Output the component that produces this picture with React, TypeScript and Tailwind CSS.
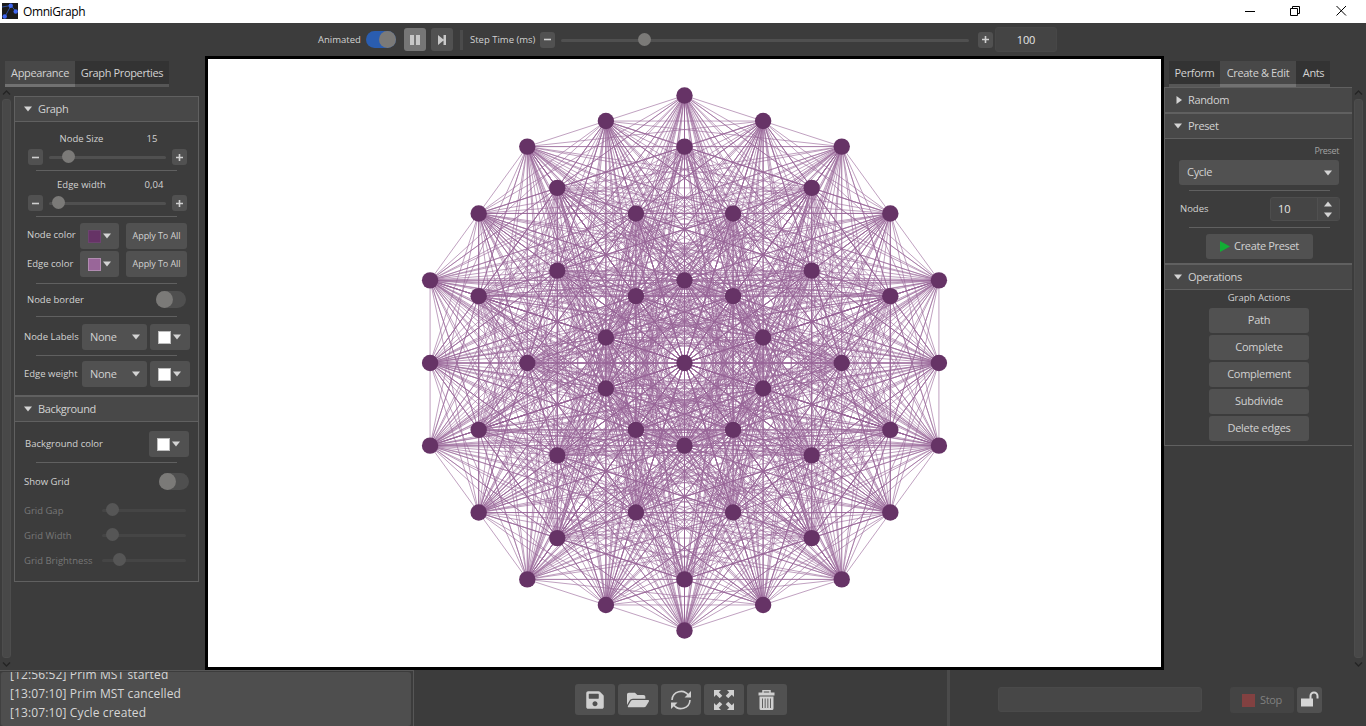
import React from "react";
import { FaSave, FaFolderOpen } from "react-icons/fa";

type P = { children?: React.ReactNode; className?: string };

const CX = 476.5;
const CY = 304;
const R = 133.75;

const unit = Array.from({ length: 10 }, (_, k) => ({
  x: R * Math.sin((k * Math.PI) / 5),
  y: -R * Math.cos((k * Math.PI) / 5),
}));

const nodes: { x: number; y: number; corner: number }[] = [];
for (let i = 0; i < 10; i++) {
  for (let j = i; j < 10; j++) {
    const n = { x: CX + unit[i].x + unit[j].x, y: CY + unit[i].y + unit[j].y, corner: i === j ? i : -1 };
    if (!nodes.some((m) => Math.hypot(m.x - n.x, m.y - n.y) < 1)) nodes.push(n);
  }
}

// Neighbouring corners are joined through the node between them, not directly.
const neighbours = (a: number, b: number) => a >= 0 && b >= 0 && [1, 9].includes(Math.abs(a - b));

const edges: string[] = [];
for (let i = 0; i < nodes.length; i++) {
  for (let j = i + 1; j < nodes.length; j++) {
    const a = nodes[i];
    const b = nodes[j];
    if (!neighbours(a.corner, b.corner)) {
      edges.push(`M${a.x.toFixed(2)} ${a.y.toFixed(2)}L${b.x.toFixed(2)} ${b.y.toFixed(2)}`);
    }
  }
}

function GraphCanvas() {
  return (
    <svg width="953" height="608" viewBox="0 0 953 608" className="block">
      <g stroke="#996699" strokeWidth="0.62" fill="none">
        {edges.map((d, i) => (
          <path key={i} d={d} />
        ))}
      </g>
      <g fill="#663366">
        {nodes.map((n, i) => (
          <circle key={i} cx={n.x} cy={n.y} r="8.2" />
        ))}
      </g>
    </svg>
  );
}

function Down({ className = "" }: P) {
  return (
    <svg width="8" height="6" viewBox="0 0 8 6" className={`shrink-0 ${className}`}>
      <path d="M0 .5h8L4 5.5z" fill="#d4d4d4" />
    </svg>
  );
}

function Small({ children, className = "" }: P) {
  return (
    <span className={`whitespace-nowrap text-[9.5px] leading-4 text-[#d2d2d2] ${className}`}>
      {children}
    </span>
  );
}

function Step({ plus = false }: { plus?: boolean }) {
  return (
    <span className="flex h-4 w-[15px] shrink-0 items-center justify-center rounded-[3px] bg-[#515151]">
      <svg width="9" height="9" viewBox="0 0 9 9" stroke="#d0d0d0" strokeWidth="1.6">
        <path d={plus ? "M1 4.5h7M4.5 1v7" : "M1 4.5h7"} />
      </svg>
    </span>
  );
}

function Slider({ className = "", knob, dim = false }: { className?: string; knob: string; dim?: boolean }) {
  return (
    <span className={`flex h-[13px] shrink-0 items-center ${className}`}>
      <span className={`h-[3px] w-full rounded-full ${dim ? "bg-[#454545]" : "bg-[#505050]"}`}>
        <span className={`-mt-[6px] block size-[13px] rounded-full ${dim ? "bg-[#565656]" : "bg-[#7b7a78]"} ${knob}`} />
      </span>
    </span>
  );
}

function Toggle({ on = false }: { on?: boolean }) {
  return (
    <span className={`flex h-[17px] w-[30px] shrink-0 rounded-full ${on ? "justify-end bg-[#2a5db0]" : "bg-[#4f4f4f]"}`}>
      <span className="size-[17px] rounded-full bg-[#7b7a78]" />
    </span>
  );
}

function Rule({ className = "" }: P) {
  return <div className={`ml-[21px] h-px w-[141px] shrink-0 bg-[#606060] ${className}`} />;
}

function Swatch({ color, className = "" }: { color: string; className?: string }) {
  return (
    <span className={`flex h-[26px] shrink-0 items-center gap-[2px] rounded-[3px] bg-[#515151] pl-2 ${className}`}>
      <span className={`size-[13px] border ${color}`} />
      <Down />
    </span>
  );
}

function Header({ children, className = "", closed = false }: P & { closed?: boolean }) {
  return (
    <div className={`flex shrink-0 items-center gap-[6px] bg-[#484848] text-[11px] tracking-[-0.36px] text-[#d2d2d2] ${className}`}>
      {closed ? (
        <svg width="8" height="8" viewBox="0 0 8 8">
          <path d="M1.5 0v8L7 4z" fill="#d4d4d4" />
        </svg>
      ) : (
        <Down />
      )}
      <span>{children}</span>
    </div>
  );
}

function Tab({ children, className = "", active = false }: P & { active?: boolean }) {
  return (
    <div
      className={`flex h-[26px] items-center justify-center whitespace-nowrap border-b-[3px] pt-[2px] text-[11px] tracking-[-0.36px] text-[#d2d2d2] ${
        active ? "border-[#717171] bg-[#484848]" : "border-[#565656] bg-[#333333]"
      } ${className}`}
    >
      {children}
    </div>
  );
}

function Scrollbar({ className = "" }: P) {
  return (
    <div className={`flex w-[9px] shrink-0 flex-col items-center ${className}`}>
      <svg width="9" height="5" viewBox="0 0 9 5" fill="none" stroke="#242424" strokeWidth="1.3" className="mt-[3px] shrink-0">
        <path d="M1 4.5l3.5-3.5L8 4.5" />
      </svg>
      <div className="mt-[4px] h-[559px] w-[9px] shrink-0 rounded-[3px] border border-[#4d4d4d] bg-[#484848]" />
      <svg width="9" height="5" viewBox="0 0 9 5" fill="none" stroke="#242424" strokeWidth="1.3" className="mt-[4px] shrink-0">
        <path d="M1 .5L4.5 4 8 .5" />
      </svg>
    </div>
  );
}

function Select({ children, className = "" }: P) {
  return (
    <span className={`flex shrink-0 items-center justify-between rounded-[3px] bg-[#515151] text-[11px] tracking-[-0.3px] text-[#d2d2d2] ${className}`}>
      <span>{children}</span>
      <Down />
    </span>
  );
}

function SliderBlock({ label, value, knob, valueClass, className = "" }: { label: string; value: string; knob: string; valueClass: string; className?: string }) {
  return (
    <>
      <div className={`flex h-4 shrink-0 ${className}`}>
        <Small className="ml-[26px] w-[81px] text-center">{label}</Small>
        <Small className={`w-[54px] text-center ${valueClass}`}>{value}</Small>
      </div>
      <div className="mt-[2px] flex h-4 shrink-0 items-center">
        <span className="w-[13px]" />
        <Step />
        <Slider className="ml-[6px] w-[117px]" knob={knob} />
        <span className="w-[6px]" />
        <Step plus />
      </div>
      <Rule className="mt-[5px]" />
    </>
  );
}

function ColorRow({ label, color, labelClass = "", className = "" }: { label: string; color: string; labelClass?: string; className?: string }) {
  return (
    <div className={`flex h-[26px] shrink-0 items-center ${className}`}>
      <Small className={`ml-3 w-[53px] ${labelClass}`}>{label}</Small>
      <Swatch color={color} className="w-[39px]" />
      <span className="ml-[7px] flex h-[26px] w-[61px] items-center justify-center whitespace-nowrap rounded-[3px] bg-[#515151] text-[9px] tracking-[-0.08px] text-[#d2d2d2]">
        Apply To All
      </span>
    </div>
  );
}

function LabelRow({ label, className = "" }: { label: string; className?: string }) {
  return (
    <div className={`flex h-[26px] shrink-0 items-center ${className}`}>
      <Small className="ml-[9px] w-[58px]">{label}</Small>
      <Select className="h-[26px] w-[65px] pl-2 pr-[7px]">None</Select>
      <Swatch color="border-[#bdbdbd] bg-white" className="ml-[3px] w-10" />
    </div>
  );
}

function GridRow({ label, knob }: { label: string; knob: string }) {
  return (
    <div className="flex h-[25px] shrink-0 items-center">
      <Small className="ml-[9px] w-[78px] !text-[#777777]">{label}</Small>
      <Slider className="w-[84px]" knob={knob} dim />
    </div>
  );
}

function LeftPanel() {
  return (
    <div className="flex w-[205px] shrink-0 flex-col">
      <div className="ml-[5px] mt-[5px] flex shrink-0">
        <Tab active className="w-[70px]">Appearance</Tab>
        <Tab className="w-[94px]">Graph Properties</Tab>
      </div>
      <div className="flex">
        <Scrollbar className="ml-[2px]" />
        <div className="ml-[3px] mt-[9px] flex h-[486px] w-[185px] flex-col border border-[#606060]">
          <Header className="h-[25px] border-b border-[#606060] pl-[9px]">Graph</Header>
          <SliderBlock className="mt-[9px]" label="Node Size" value="15" valueClass="ml-[3px]" knob="ml-[12.5px]" />
          <SliderBlock className="mt-[6px]" label="Edge width" value="0,04" valueClass="ml-[5px]" knob="ml-[2.5px]" />
          <ColorRow className="mt-[6px]" labelClass="pb-[2px]" label="Node color" color="border-[#6d4370] bg-[#663366]" />
          <ColorRow className="mt-[2px]" label="Edge color" color="border-[#b18cb1] bg-[#996699]" />
          <Rule className="mt-[6px]" />
          <div className="mt-[7px] flex h-[17px] shrink-0 items-center">
            <Small className="ml-3 w-[129px]">Node border</Small>
            <Toggle />
          </div>
          <Rule className="mt-[8px]" />
          <LabelRow className="mt-[7px]" label="Node Labels" />
          <Rule className="mt-[5px]" />
          <LabelRow className="mt-[5px]" label="Edge weight" />
          <Header className="mt-2 h-[27px] border-b border-t-2 border-[#606060] pl-[9px]">Background</Header>
          <div className="mt-[9px] flex h-[26px] shrink-0 items-center">
            <Small className="ml-[10px] w-[124px]">Background color</Small>
            <Swatch color="border-[#bdbdbd] bg-white" className="w-10" />
          </div>
          <Rule className="mt-[5px]" />
          <div className="mt-[10px] flex h-[17px] shrink-0 items-center">
            <Small className="ml-[9px] w-[135px]">Show Grid</Small>
            <Toggle />
          </div>
          <div className="h-[8px] shrink-0" />
          <GridRow label="Grid Gap" knob="ml-[4px]" />
          <GridRow label="Grid Width" knob="ml-[3.5px]" />
          <GridRow label="Grid Brightness" knob="ml-[11px]" />
        </div>
      </div>
    </div>
  );
}

function RightPanel() {
  return (
    <div className="flex w-[202px] shrink-0 flex-col">
      <div className="ml-[5px] mt-[5px] flex shrink-0">
        <Tab className="w-[51px]">Perform</Tab>
        <Tab active className="w-[76px]">Create &amp; Edit</Tab>
        <Tab className="w-[34px] pl-px">Ants</Tab>
      </div>
      <div className="flex">
        <div className="flex h-[359px] w-[188px] flex-col border-y border-l border-[#606060]">
          <Header closed className="h-[24px] !gap-[5px] pl-[10px]">Random</Header>
          <Header className="h-[27px] border-b border-t-2 border-[#606060] pl-[9px]">Preset</Header>
          <span className="mr-[13px] mt-[4px] text-right text-[9px] leading-4 tracking-[-0.35px] text-[#a2a2a2]">Preset</span>
          <Select className="ml-[14px] mt-[1px] h-[25px] w-[160px] pl-2 pr-[7px]">Cycle</Select>
          <Rule className="!ml-6 mt-[5px]" />
          <div className="mt-[6px] flex h-[24px] shrink-0 items-center">
            <Small className="ml-[15px] w-[90px]">Nodes</Small>
            <span className="flex h-[24px] w-[70px] overflow-hidden rounded-[3px] border border-[#4d4d4d] bg-[#454545]">
              <span className="flex w-[46px] items-center pl-[7px] text-[11px] text-[#e6e6e6]">10</span>
              <span className="flex flex-1 flex-col items-center justify-center gap-[5px] border-l border-[#505050] bg-[#484848] pr-px">
                <Down className="rotate-180" />
                <Down />
              </span>
            </span>
          </div>
          <Rule className="!ml-6 mt-[6px]" />
          <div className="ml-[41px] mt-[6px] flex h-[25px] w-[107px] shrink-0 items-center justify-center gap-[4px] rounded-[3px] bg-[#515151] text-[11px] tracking-[-0.34px] text-[#d2d2d2]">
            <svg width="10" height="11" viewBox="0 0 10 11">
              <path d="M0 0v11l10-5.5z" fill="#12ae35" />
            </svg>
            Create Preset
          </div>
          <Header className="mt-[4px] h-[27px] border-b border-t-2 border-[#606060] pl-[9px]">Operations</Header>
          <Small className="pl-px text-center">Graph Actions</Small>
          <div className="ml-[44px] mt-[2px] flex w-[100px] flex-col gap-[2px]">
            {["Path", "Complete", "Complement", "Subdivide", "Delete edges"].map((t) => (
              <div key={t} className="flex h-[25px] items-center justify-center rounded-[3px] bg-[#515151] text-[11px] tracking-[-0.27px] text-[#d2d2d2]">
                {t}
              </div>
            ))}
          </div>
        </div>
        <Scrollbar className="ml-[2px]" />
      </div>
    </div>
  );
}

function Tool({ children }: P) {
  return <span className="flex h-[31px] w-10 items-center justify-center rounded-[3px] bg-[#515151] text-[#d0d0d0]">{children}</span>;
}

function RefreshIcon() {
  return (
    <svg width="20" height="20" viewBox="0 0 20 20" fill="none" stroke="#d0d0d0" strokeWidth="1.6">
      <path d="M1 10a9 9 0 0 1 16.500-4.500M19 10a9 9 0 0 1-16.500 4.500" />
      <path d="M20 1v6.500h-6.500zM0 19v-6.500h6.500z" fill="#d0d0d0" stroke="none" />
    </svg>
  );
}

function ExpandIcon() {
  const arrow = "M0 0h7L4.800 2.200 8.300 5.700 5.700 8.300 2.200 4.800 0 7z";
  return (
    <svg width="20" height="20" viewBox="0 0 20 20" fill="#d0d0d0">
      <path d={arrow} />
      <path d={arrow} transform="matrix(-1 0 0 1 20 0)" />
      <path d={arrow} transform="matrix(1 0 0 -1 0 20)" />
      <path d={arrow} transform="matrix(-1 0 0 -1 20 20)" />
    </svg>
  );
}

function TrashIcon() {
  return (
    <svg width="17" height="20" viewBox="0 0 17 20" className="mr-[2px]">
      <path d="M5 3V.8h7V3" fill="none" stroke="#d0d0d0" strokeWidth="1.5" />
      <path d="M.5 2.500h16v3H.5zM1.500 6.500h14v12a1.500 1.500 0 0 1-1.500 1.500H3a1.500 1.500 0 0 1-1.500-1.500z" fill="#d0d0d0" />
      <path d="M4.500 8.500V18M7.170 8.500V18M9.830 8.500V18M12.500 8.500V18" stroke="#606060" strokeWidth="1" />
    </svg>
  );
}

function TitleBar() {
  return (
    <div className="flex h-[23px] shrink-0 items-center bg-white text-black">
      <svg width="16" height="16" viewBox="0 0 16 16" className="-mt-px ml-[2px]">
        <path d="M0 0h16v16H0z" fill="#1b1b1b" />
        <path d="M3 13.500L9 2.500l5 6M0 4l9-1.500" fill="none" stroke="#2f4f9e" strokeWidth="1" />
        <circle cx="2.700" cy="13.500" r="2.200" fill="#3f66f0" />
        <circle cx="8.700" cy="2.700" r="2.200" fill="#3f66f0" />
        <circle cx="13.700" cy="8.500" r="2.200" fill="#3f66f0" />
      </svg>
      <span className="ml-[5px] text-[12px] tracking-[-0.4px]">OmniGraph</span>
      <svg width="102" height="12" viewBox="0 0 102 12" fill="none" stroke="#000" className="ml-auto mr-[19px] -mt-[2px]">
        <path d="M0 6.500h10M45.500 3.500h7v7h-7zM47.500 3.500v-2h7v7h-2M91.500 1l9.500 9.500M101 1L91.500 10.500" />
      </svg>
    </div>
  );
}

function Toolbar() {
  return (
    <div className="flex h-[33px] shrink-0 items-center">
      <Small className="ml-[318px] w-[48px]">Animated</Small>
      <Toggle on />
      <span className="ml-2 flex h-[23px] w-[22px] items-center justify-center gap-[2px] rounded-[3px] bg-[#767676]">
        <span className="h-[10px] w-[4px] bg-[#c8c8c8]" />
        <span className="h-[10px] w-[4px] bg-[#c8c8c8]" />
      </span>
      <span className="ml-[5px] flex h-[23px] w-[22px] items-center justify-center rounded-[3px] bg-[#515151]">
        <svg width="8" height="10" viewBox="0 0 8 10" fill="#c8c8c8">
          <path d="M0 0l5.500 4.500V0H8v10H5.500V5.500L0 10z" />
        </svg>
      </span>
      <span className="ml-[7px] h-5 w-[3px] bg-[#4b4b4b]" />
      <Small className="ml-[7px] w-[70px]">Step Time (ms)</Small>
      <Step />
      <Slider className="ml-[6px] mt-px w-[408px]" knob="ml-[77px]" />
      <span className="w-[9px]" />
      <Step plus />
      <span className="ml-[2px] flex h-[25px] w-[62px] items-center justify-center rounded-[3px] border border-[#474747] bg-[#444444] pt-[2px] text-[11px] tracking-[-0.2px] text-[#e6e6e6]">
        100
      </span>
    </div>
  );
}

function BottomBar() {
  return (
    <div className="flex h-[56px] shrink-0">
      <div className="w-[414px] shrink-0 border-r border-t border-[#575757] pr-[2px] pt-px">
        <div className="flex h-[54px] w-[411px] flex-col justify-end overflow-hidden rounded-[3px] border-l border-[#404040] bg-[#4e4e4e] pb-[4px] pl-[9px] text-[12px] leading-[19px] tracking-[0.13px] text-[#d6d6d6]">
          <div>[12:56:52] Prim MST started</div>
          <div>[13:07:10] Prim MST cancelled</div>
          <div>[13:07:10] Cycle created</div>
        </div>
      </div>
      <div className="ml-[161px] mt-[14px] flex w-[372px] shrink-0 gap-[3px]">
        <Tool><FaSave size={20} /></Tool>
        <Tool><FaFolderOpen size={22} /></Tool>
        <Tool><RefreshIcon /></Tool>
        <Tool><ExpandIcon /></Tool>
        <Tool><TrashIcon /></Tool>
      </div>
      <div className="w-[3px] shrink-0 bg-[#4b4b4b]" />
      <div className="ml-[48px] mt-[17px] h-[25px] w-[204px] rounded-[3px] border border-[#4a4a4a] bg-[#474747]" />
      <div className="ml-[28px] mt-[17px] flex h-[26px] w-[64px] items-center gap-[5px] rounded-[3px] bg-[#444444] pl-3 text-[11px] tracking-[-0.35px] text-[#808080]">
        <span className="size-[13px] bg-[#824141]" />
        Stop
      </div>
      <div className="ml-[3px] mt-[17px] flex h-[26px] w-[25px] items-center justify-center rounded-[3px] bg-[#515151]">
        <svg width="18" height="16" viewBox="0 0 18 16" className="-mt-[2px]">
          <path d="M0 7.500h12v8H0z" fill="#d6d6d6" />
          <path d="M9.500 8V5a3.500 3.500 0 0 1 7 0v2.500" fill="none" stroke="#d6d6d6" strokeWidth="2" />
        </svg>
      </div>
    </div>
  );
}

export default function App() {
  return (
    <div className="flex h-[726px] w-[1366px] flex-col overflow-hidden bg-[#3c3c3c] font-['Open_Sans','Noto_Sans',sans-serif]">
      <TitleBar />
      <Toolbar />
      <div className="flex h-[614px] shrink-0">
        <LeftPanel />
        <div className="h-[614px] w-[959px] shrink-0 border-[3px] border-black bg-white">
          <GraphCanvas />
        </div>
        <RightPanel />
      </div>
      <BottomBar />
    </div>
  );
}
